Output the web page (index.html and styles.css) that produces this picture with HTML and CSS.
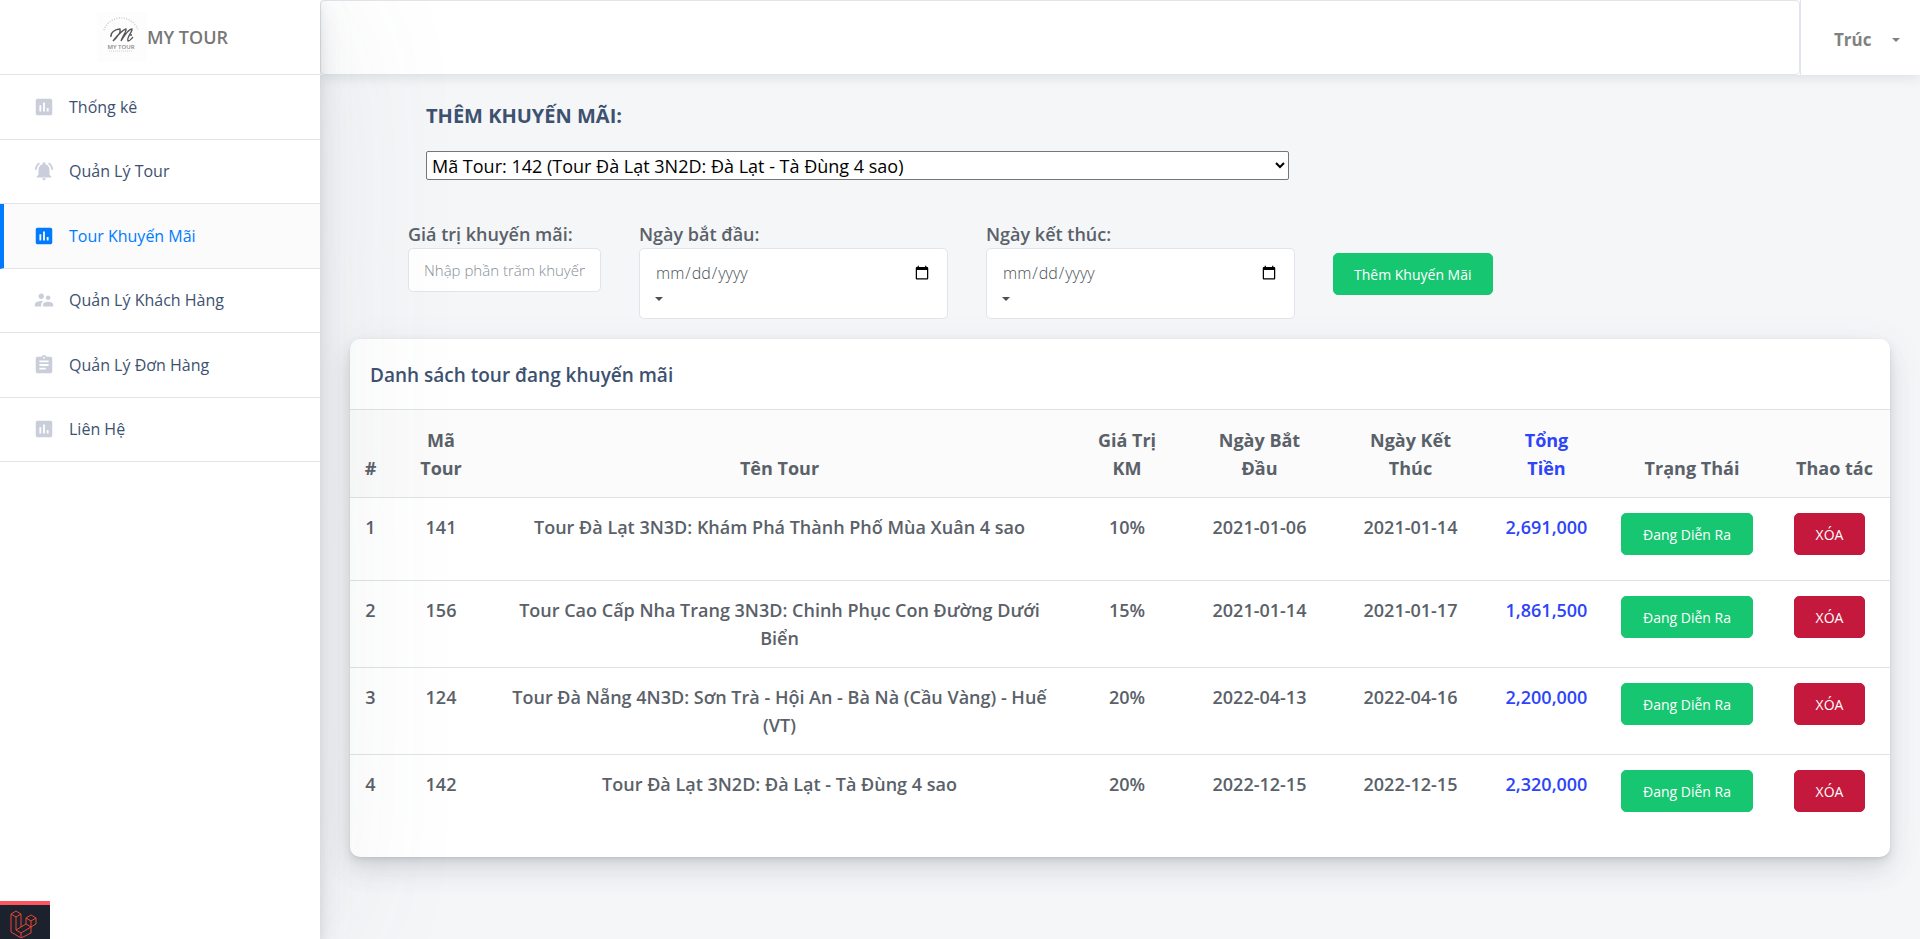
FILE: index.html
```html
<!DOCTYPE html>
<html lang="vi">
<head>
<meta charset="utf-8">
<title>My Tour</title>
<link rel="stylesheet" href="styles.css">
</head>
<body>
<svg class="sprite" aria-hidden="true">
  <symbol id="chart" viewBox="0 0 24 24"><path d="M19 3H5c-1.100 0-2 .9-2 2v14c0 1.100.9 2 2 2h14c1.100 0 2-.9 2-2V5c0-1.100-.9-2-2-2zM9 17H7v-7h2v7zm4 0h-2V7h2v10zm4 0h-2v-4h2v4z"/></symbol>
  <symbol id="bell" viewBox="0 0 24 24"><path d="M7.580 4.080L6.150 2.650C3.750 4.480 2.170 7.300 2.030 10.500h2c.15-2.650 1.510-4.970 3.550-6.420zm12.390 6.420h2c-.15-3.200-1.730-6.020-4.120-7.850l-1.420 1.430c2.020 1.450 3.390 3.770 3.540 6.420zM18 11c0-3.070-1.640-5.640-4.500-6.320V4c0-.83-.67-1.500-1.500-1.500s-1.500.67-1.500 1.500v.68C7.630 5.360 6 7.920 6 11v5l-2 2v1h16v-1l-2-2v-5zm-6 11c.14 0 .27-.01.400-.04.650-.14 1.180-.58 1.440-1.180.1-.24.150-.5.150-.78h-4c.01 1.100.9 2 2.010 2z"/></symbol>
  <symbol id="people" viewBox="0 0 24 24"><path d="M16.500 12c1.380 0 2.490-1.120 2.490-2.500S17.880 7 16.500 7 14 8.120 14 9.500s1.120 2.500 2.500 2.500zM9 11c1.660 0 2.990-1.340 2.990-3S10.660 5 9 5 6 6.340 6 8s1.340 3 3 3zm7.500 3c-1.830 0-5.500.92-5.500 2.750V19h11v-2.250c0-1.830-3.670-2.750-5.500-2.750zM9 13c-2.330 0-7 1.170-7 3.500V19h7v-2.250c0-.85.330-2.340 2.370-3.470C10.500 13.100 9.660 13 9 13z"/></symbol>
  <symbol id="clip" viewBox="0 0 24 24"><path d="M19 3h-4.180C14.400 1.840 13.300 1 12 1s-2.400.84-2.820 2H5c-1.100 0-2 .9-2 2v14c0 1.100.9 2 2 2h14c1.100 0 2-.9 2-2V5c0-1.100-.9-2-2-2zm-7 0c.55 0 1 .45 1 1s-.45 1-1 1-1-.45-1-1 .45-1 1-1zm2 14H7v-2h7v2zm3-4H7v-2h10v2zm0-4H7V7h10v2z"/></symbol>
</svg>
<div class="layout">
  <aside class="sidebar">
    <a class="brand" href="#">
      <svg class="brand-logo" viewBox="0 0 50 50" aria-hidden="true">
        <rect width="50" height="50" fill="#fdfdfd"/>
        <path d="M7 18A18 18 0 0 1 41 18" fill="none" stroke="#ccc" stroke-width="1.500" stroke-dasharray="1 1.500"/>
        <path d="M14 25c-1-4 4-8 9-8 1 3-3 9-7 12 4-5 9-11 13-12 1 2-4 8-5 12 3-5 8-12 11-12 1 2-6 9-4 12 2 0 3-2 5-4" fill="none" stroke="#555" stroke-width="1.300"/>
        <circle cx="34" cy="23" r="1" fill="#555"/>
        <text class="logo-text" x="24" y="37" text-anchor="middle">MY TOUR</text>
        <path d="M12 39h24" stroke="#ccc" stroke-dasharray="1 1"/>
      </svg>
      <span>MY TOUR</span>
    </a>
    <nav class="nav">
      <a class="nav-item" href="#"><svg><use href="#chart"/></svg>Thống kê</a>
      <a class="nav-item" href="#"><svg><use href="#bell"/></svg>Quản Lý Tour</a>
      <a class="nav-item active" href="#"><svg><use href="#chart"/></svg>Tour Khuyến Mãi</a>
      <a class="nav-item" href="#"><svg><use href="#people"/></svg>Quản Lý Khách Hàng</a>
      <a class="nav-item" href="#"><svg><use href="#clip"/></svg>Quản Lý Đơn Hàng</a>
      <a class="nav-item" href="#"><svg><use href="#chart"/></svg>Liên Hệ</a>
    </nav>
  </aside>
  <main class="main">
    <header class="topbar">
      <div class="search"></div>
      <button class="user" type="button">Trúc <i class="caret"></i></button>
    </header>
    <div class="content">
      <form class="promo">
        <h2 class="promo-title"><label for="tour">THÊM KHUYẾN MÃI:</label></h2>
        <select class="tour-select" id="tour"><option>Mã Tour: 142 (Tour Đà Lạt 3N2D: Đà Lạt - Tà Đùng 4 sao)</option></select>
        <div class="fields">
          <div class="field narrow">
            <label for="value">Giá trị khuyến mãi:</label>
            <input class="control" id="value" type="text" placeholder="Nhập phần trăm khuyến mãi">
          </div>
          <div class="field">
            <label for="start">Ngày bắt đầu:</label>
            <div class="datebox"><input id="start" type="date"><i class="caret"></i></div>
          </div>
          <div class="field">
            <label for="end">Ngày kết thúc:</label>
            <div class="datebox"><input id="end" type="date"><i class="caret"></i></div>
          </div>
          <button class="btn add" type="button">Thêm Khuyến Mãi</button>
        </div>
      </form>
      <section class="card">
        <h3 class="card-title">Danh sách tour đang khuyến mãi</h3>
        <table>
          <colgroup><col class="c-no"><col class="c-id"><col><col class="c-pct"><col class="c-start"><col class="c-end"><col class="c-sum"><col class="c-state"><col class="c-act"></colgroup>
          <thead>
            <tr><th>#</th><th>Mã<br>Tour</th><th>Tên Tour</th><th>Giá Trị<br>KM</th><th>Ngày Bắt<br>Đầu</th><th>Ngày Kết<br>Thúc</th><th class="sum">Tổng<br>Tiền</th><th>Trạng Thái</th><th>Thao tác</th></tr>
          </thead>
          <tbody>
            <tr><td>1</td><td>141</td><td>Tour Đà Lạt 3N3D: Khám Phá Thành Phố Mùa Xuân 4 sao</td><td>10%</td><td>2021-01-06</td><td>2021-01-14</td><td class="sum">2,691,000</td><td><button class="btn" type="button">Đang Diễn Ra</button></td><td><button class="btn danger" type="button">XÓA</button></td></tr>
            <tr><td>2</td><td>156</td><td>Tour Cao Cấp Nha Trang 3N3D: Chinh Phục Con Đường Dưới Biển</td><td>15%</td><td>2021-01-14</td><td>2021-01-17</td><td class="sum">1,861,500</td><td><button class="btn" type="button">Đang Diễn Ra</button></td><td><button class="btn danger" type="button">XÓA</button></td></tr>
            <tr><td>3</td><td>124</td><td>Tour Đà Nẵng 4N3D: Sơn Trà - Hội An - Bà Nà (Cầu Vàng) - Huế (VT)</td><td>20%</td><td>2022-04-13</td><td>2022-04-16</td><td class="sum">2,200,000</td><td><button class="btn" type="button">Đang Diễn Ra</button></td><td><button class="btn danger" type="button">XÓA</button></td></tr>
            <tr><td>4</td><td>142</td><td>Tour Đà Lạt 3N2D: Đà Lạt - Tà Đùng 4 sao</td><td>20%</td><td>2022-12-15</td><td>2022-12-15</td><td class="sum">2,320,000</td><td><button class="btn" type="button">Đang Diễn Ra</button></td><td><button class="btn danger" type="button">XÓA</button></td></tr>
          </tbody>
        </table>
      </section>
    </div>
  </main>
</div>
<button class="debug" type="button" aria-label="Debug">
  <svg viewBox="0 0 28 28" aria-hidden="true"><path d="M1 4l5-3 5 3v13l5-3V8l5-3 5 3v6l-5 3v6l-10 5-10-6zM1 4l5 3 5-3M6 7v13l5-3M6 20l5 3 10-6M11 23v5M16 8l5 3 5-3M21 11v6M16 14l5 3"/></svg>
</button>
</body>
</html>
```
FILE: styles.css
```css
* { box-sizing: border-box; }
body {
  margin: 0;
  font-family: "Open Sans", "Noto Sans", sans-serif;
  font-size: 18px;
  line-height: 28px;
  color: #5a6169;
  background: #f5f6f8;
}
a { text-decoration: none; color: inherit; }
button, input, select { font-family: inherit; }
.sprite { position: absolute; width: 0; height: 0; }

.layout { display: flex; min-height: 100vh; }

.sidebar {
  position: relative;
  z-index: 2;
  flex: 0 0 320px;
  background: #fff;
  box-shadow: 0 2px 150px rgba(90, 97, 105, .1), 0 4px 8px rgba(90, 97, 105, .12),
    0 15px 22px rgba(90, 97, 105, .1), 0 7px 35px rgba(165, 182, 201, .1);
}
.brand {
  display: flex;
  align-items: center;
  justify-content: center;
  height: 75px;
  padding-left: 5px;
  border-bottom: 1px solid #e1e5eb;
  font-weight: 600;
  color: #777;
}
.brand-logo { width: 50px; height: 50px; }
.logo-text { font-size: 6px; font-weight: 600; fill: #888; }

.nav { display: grid; grid-auto-rows: 1fr; height: 387px; }
.nav-item {
  display: flex;
  align-items: center;
  gap: 14px;
  padding: 0 33px;
  border-bottom: 1px solid #e1e5eb;
  font-size: 16px;
  color: #3d5170;
}
.nav-item svg { width: 22px; height: 22px; fill: #cacedb; }
.nav-item.active {
  padding-left: 29px;
  border-left: 4px solid #007bff;
  background: #fbfbfb;
  color: #007bff;
}
.nav-item.active svg { fill: #007bff; }

.main { flex: 1; min-width: 0; }
.topbar {
  display: flex;
  height: 75px;
  background: #fff;
  box-shadow: 0 2px 12px rgba(90, 97, 105, .16);
}
.search { flex: 1; border: 1px solid #e1e5eb; border-radius: 4px; }
.user {
  display: flex;
  align-items: center;
  justify-content: space-between;
  width: 120px;
  padding: 4px 20px 0 33px;
  border: 0;
  border-left: 1px solid #e1e5eb;
  background: none;
  font-size: 17px;
  font-weight: 700;
  color: #818181;
}
.caret {
  display: block;
  width: 0;
  border: 4px solid transparent;
  border-top-color: currentColor;
  border-bottom: 0;
}

.content { padding: 24px 30px; }
.promo { width: 90%; padding-left: 58px; }
.promo-title { margin: 3px 0 21px 18px; font-size: 20px; line-height: 28px; font-weight: 700; color: #3d5170; }
.tour-select {
  display: block;
  width: 65%;
  height: 29px;
  margin-left: 18px;
  padding: 0 1px;
  border: 1px solid #767676;
  border-radius: 2px;
  background: #fff;
  color: #000;
  font-size: 18px;
}
.fields { display: flex; gap: 38px; margin-top: 40px; }
.field { flex: 0 0 309px; }
.field.narrow { flex-basis: 193px; }
.field label { display: block; font-weight: 600; }
.control, .datebox {
  display: block;
  width: 100%;
  border: 1px solid #e1e5eb;
  border-radius: 5px;
  background: #fff;
}
.control { height: 44px; padding: 0 15px; font-size: 15px; font-weight: 300; }
.control::placeholder { color: #868e96; }
.datebox { height: 71px; padding: 10px 15px; color: #495057; }
.datebox input {
  display: block;
  width: 100%;
  height: 28px;
  padding: 0;
  border: 0;
  background: none;
  color: #495057;
  font-size: 16px;
  font-weight: 300;
}
.datebox .caret { margin-top: 10px; }

.btn {
  height: 42px;
  padding: 0 20px;
  border: 1px solid #17c671;
  border-radius: 5px;
  background: #17c671;
  color: #fff;
  font-size: 14px;
  white-space: nowrap;
}
td .btn { padding: 0 21px; }
.btn.danger { border-color: #c4183c; background: #c4183c; }
.btn.add { margin-top: 33px; }

.card {
  margin-top: 20px;
  padding-bottom: 20px;
  border-radius: 10px;
  background: #fff;
  box-shadow: 0 8px 35px rgba(90, 97, 105, .1), 0 15px 23px rgba(90, 97, 105, .1),
    0 4px 9px rgba(90, 97, 105, .12), 0 2px 3px rgba(90, 97, 105, .1);
}
.card-title { margin: 0; padding: 22px 20px 20px; font-size: 19px; line-height: 28px; font-weight: 600; color: #3d5170; }
table { width: 100%; table-layout: fixed; border-collapse: separate; border-spacing: 0; text-align: center; }
.c-no { width: 41px; }
.c-id { width: 100px; }
.c-pct { width: 118px; }
.c-start { width: 147px; }
.c-end { width: 155px; }
.c-sum { width: 117px; }
.c-state { width: 174px; }
.c-act { width: 111px; }
th, td { padding: 15px 12px; border-top: 1px solid #dee2e6; }
th { vertical-align: bottom; padding-top: 16px; background: #fbfbfb; font-weight: 700; }
td { height: 83px; vertical-align: top; font-weight: 600; }
th:nth-last-child(-n+2) { padding-right: 12px; white-space: nowrap; }
td:nth-last-child(-n+2) { padding-right: 22px; }
.sum { color: #2d44fa; }

.debug {
  position: fixed;
  z-index: 3;
  left: 0;
  bottom: 0;
  width: 50px;
  height: 38px;
  padding: 4px 10px 0;
  border: 0;
  border-top: 4px solid #ff5560;
  background: #1c212e;
}
.debug svg { display: block; width: 28px; height: 28px; fill: none; stroke: #eb4432; stroke-width: 1; }
```
